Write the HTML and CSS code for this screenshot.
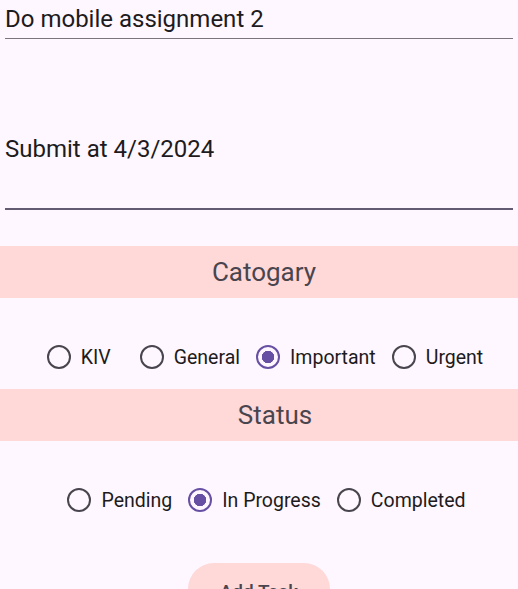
FILE: index.html
```html
<!DOCTYPE html>
<html>
<head>
<meta charset="utf-8">
<link rel="stylesheet" href="styles.css">
</head>
<body>
<div class="page">
  <div class="field field-title">
    <div class="field-text">Do mobile assignment 2</div>
  </div>
  <div class="field field-desc">
    <div class="field-text">Submit at 4/3/2024</div>
  </div>
  <div class="band band-cat">Catogary</div>
  <div class="radio-row row-cat">
    <label class="radio kiv"><span class="dot"></span><span class="lbl">KIV</span></label>
    <label class="radio"><span class="dot"></span><span class="lbl">General</span></label>
    <label class="radio on"><span class="dot"></span><span class="lbl">Important</span></label>
    <label class="radio"><span class="dot"></span><span class="lbl">Urgent</span></label>
  </div>
  <div class="band band-status">Status</div>
  <div class="radio-row row-status">
    <label class="radio"><span class="dot"></span><span class="lbl">Pending</span></label>
    <label class="radio on"><span class="dot"></span><span class="lbl">In Progress</span></label>
    <label class="radio"><span class="dot"></span><span class="lbl">Completed</span></label>
  </div>
  <div class="actions">
    <button class="add-btn">Add Task</button>
  </div>
</div>
</body>
</html>
```
FILE: styles.css
```css
html, body {
  margin: 0;
  padding: 0;
  background: #fef7ff;
  overflow: hidden;
}
body {
  font-family: Roboto, "Noto Sans", sans-serif;
  color: #1d1b20;
  width: 518px;
  height: 589px;
}
.page {
  display: flex;
  flex-direction: column;
}
.field {
  margin: 0 5px;
  display: flex;
  flex-direction: column;
}
.field-text {
  font-size: 24px;
  line-height: 28px;
}
.field-title {
  padding-top: 5px;
  height: 33px;
  border-bottom: 1px solid #79747e;
}
.field-desc {
  margin-top: 96px;
  height: 73px;
  border-bottom: 2px solid #625b71;
}
.band {
  background: #ffd8d8;
  height: 52px;
  display: flex;
  align-items: center;
  justify-content: center;
  font-size: 26px;
  color: #49454f;
}
.band-cat {
  margin-top: 36px;
  padding-left: 10px;
}
.band-status {
  padding-left: 32px;
}
.radio-row {
  display: flex;
  justify-content: center;
  align-items: center;
  height: 48px;
}
.row-cat {
  margin-top: 35px;
  margin-bottom: 8px;
}
.row-status {
  margin-top: 35px;
  padding-left: 3px;
}
.radio {
  display: flex;
  align-items: center;
  margin: 0 2px;
}
.radio.kiv {
  margin-right: 15px;
}
.dot {
  width: 48px;
  height: 48px;
  display: flex;
  align-items: center;
  justify-content: center;
  margin-right: -2px;
}
.dot::before {
  content: "";
  box-sizing: border-box;
  width: 24px;
  height: 24px;
  border-radius: 50%;
  border: 2.5px solid #49454f;
}
.radio.on .dot::before {
  border-color: #6750a4;
  background: radial-gradient(circle, #6750a4 0 6px, transparent 6.5px);
}
.lbl {
  font-size: 19.5px;
  color: #1d1b20;
}
.actions {
  display: flex;
  justify-content: center;
  margin-top: 39px;
}
.add-btn {
  width: 142px;
  height: 52px;
  border: none;
  border-radius: 26px;
  background: #ffd8d8;
  color: #49454f;
  font-family: Roboto, sans-serif;
  font-size: 19px;
  font-weight: 500;
  padding: 4px 0 0;
}
```
